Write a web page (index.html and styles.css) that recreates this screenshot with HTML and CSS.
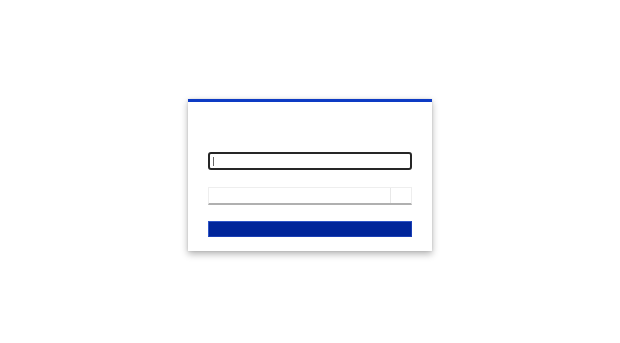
FILE: index.html
```html
<!DOCTYPE html>
<html>
<head>
<meta charset="utf-8">
<link rel="stylesheet" href="styles.css">
</head>
<body>
<div class="page">
  <div class="card">
    <div class="field field-active"><span class="caret"></span></div>
    <div class="field-group">
      <div class="field-main"></div>
      <div class="field-addon"></div>
    </div>
    <div class="submit"></div>
  </div>
</div>
</body>
</html>
```
FILE: styles.css
```css
html, body {
  margin: 0;
  padding: 0;
  background: #ffffff;
  font-family: "Liberation Sans", Arial, sans-serif;
}
body {
  min-height: 100vh;
}
.page {
  display: flex;
  justify-content: center;
  align-items: flex-start;
  padding-top: 99px;
  min-height: 343px;
  box-sizing: border-box;
}
.card {
  width: 244px;
  box-sizing: border-box;
  background: #fff;
  border-top: 3px solid #0d3bc4;
  box-shadow: 0 3px 7px rgba(0,0,0,0.3), 0 0 2px rgba(0,0,0,0.12);
  padding: 50px 20px 14px;
  display: flex;
  flex-direction: column;
}
.field {
  height: 18px;
  box-sizing: border-box;
  border: 2px solid #262626;
  border-radius: 3px;
  display: flex;
  align-items: center;
  padding-left: 3px;
}
.caret {
  width: 1px;
  height: 9px;
  background: #666;
}
.field-group {
  margin-top: 17px;
  height: 18px;
  box-sizing: border-box;
  display: flex;
  border: 1px solid #eeeeee;
  border-bottom: 2px solid #b0b0b0;
}
.field-main {
  flex: 1;
  border-right: 1px solid #e8e8e8;
}
.field-addon {
  width: 20px;
}
.submit {
  margin-top: 16px;
  height: 16px;
  box-sizing: border-box;
  background: #00259a;
  border: 1px solid #2f55c8;
  border-right-color: #1a3fb5;
  border-bottom-color: #1a3fb5;
}
```
